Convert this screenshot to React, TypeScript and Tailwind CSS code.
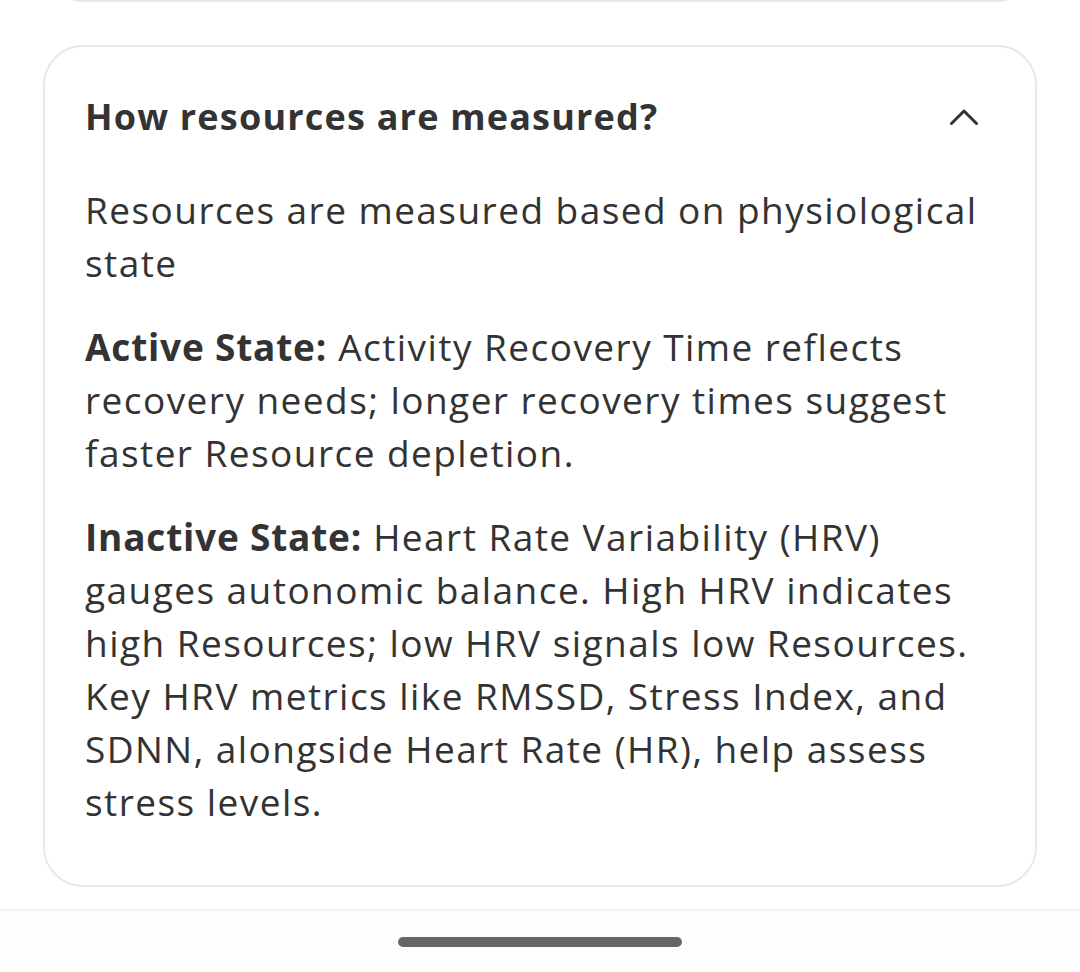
const font = { fontFamily: "'Open Sans', Lato, sans-serif" };

function ChevronUp() {
  return (
    <svg width="30" height="18" viewBox="0 0 30 18" fill="none">
      <path
        d="M2.5 15.5 L15 3 L27.5 15.5"
        stroke="#333333"
        strokeWidth="3"
        strokeLinecap="round"
        strokeLinejoin="round"
      />
    </svg>
  );
}

export default function App() {
  return (
    <div className="w-[1080px] h-[972px] bg-white overflow-hidden flex flex-col text-[#333333]" style={font}>
      {/* tail of the card above */}
      <div className="px-[43px] -mt-[60px]">
        <div className="h-[62px] rounded-b-[40px] border-2 border-t-0 border-[#e8e8e8]" />
      </div>

      <div className="px-[43px] pt-[43px]">
        <div className="rounded-[40px] border-2 border-[#e8e8e8] px-[40px] pt-[46px] pb-[57px]">
          <div className="flex items-center justify-between">
            <h3 className="text-[36px] font-bold leading-[48px] tracking-[1.2px]">
              How resources are measured?
            </h3>
            <div className="mr-[16px]">
              <ChevronUp />
            </div>
          </div>

          <div className="mt-[42px] text-[37px] leading-[53px] tracking-[1.45px] whitespace-nowrap flex flex-col gap-[31px]">
            <p>
              Resources are measured based on physiological
              <br />
              state
            </p>
            <p>
              <span className="font-bold tracking-[0.8px]">Active State:</span> Activity Recovery Time
              reflects
              <br />
              recovery needs; longer recovery times suggest
              <br />
              faster Resource depletion.
            </p>
            <p>
              <span className="font-bold tracking-[0.8px]">Inactive State:</span> Heart Rate Variability
              (HRV)
              <br />
              gauges autonomic balance. High HRV indicates
              <br />
              high Resources; low HRV signals low Resources.
              <br />
              Key HRV metrics like RMSSD, Stress Index, and
              <br />
              SDNN, alongside Heart Rate (HR), help assess
              <br />
              stress levels.
            </p>
          </div>
        </div>
      </div>

      <div className="mt-[22px] border-t-2 border-[#f4f4f4] flex-1 flex justify-center bg-[#fefefe]">
        <div className="mt-[26px] w-[284px] h-[10px] rounded-full bg-[#666666]" />
      </div>
    </div>
  );
}
